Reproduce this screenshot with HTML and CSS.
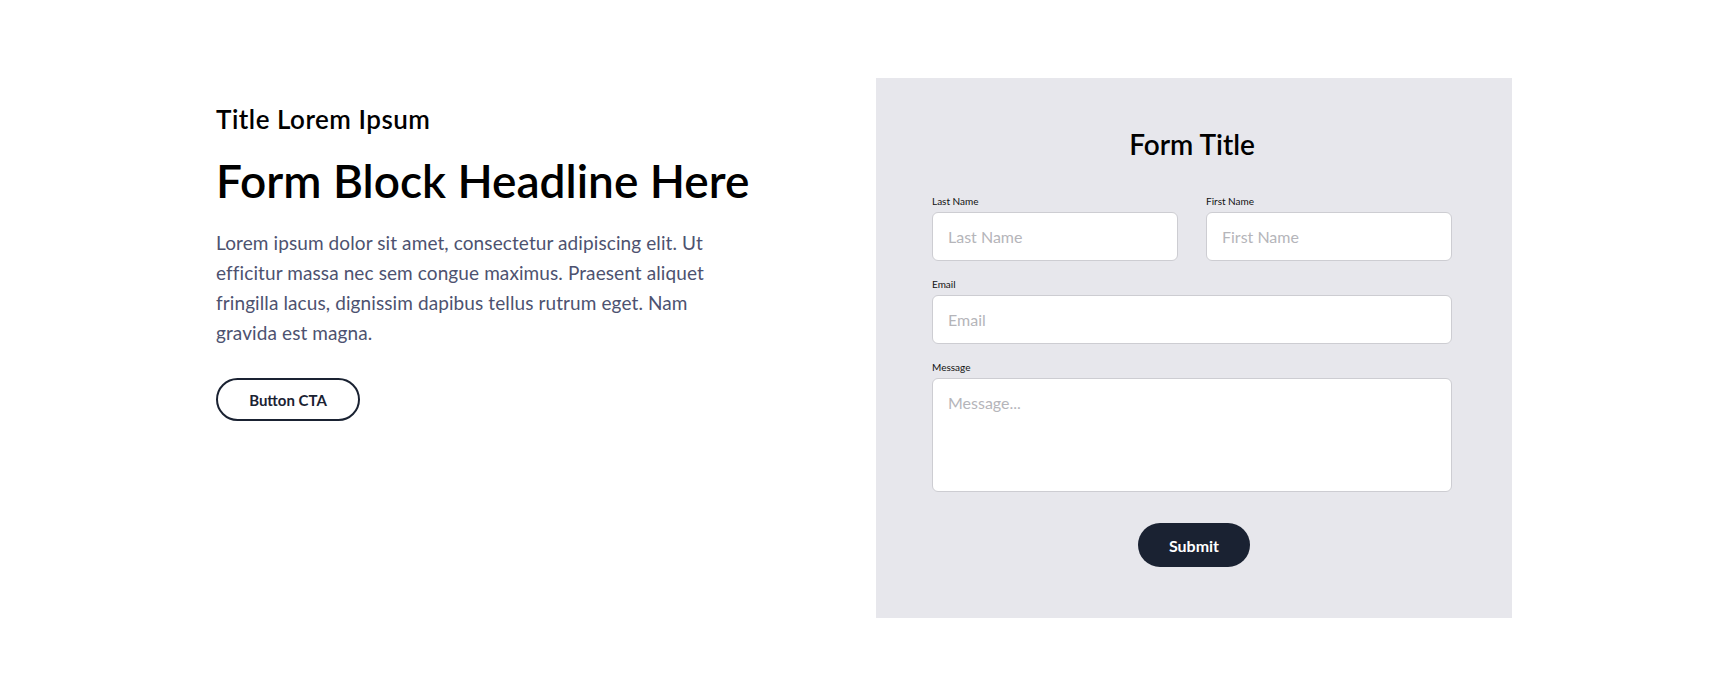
FILE: index.html
```html
<!DOCTYPE html>
<html lang="en">
<head>
<meta charset="utf-8">
<title>Form Block</title>
<link rel="stylesheet" href="styles.css">
</head>
<body>
<section class="section">
  <div class="container">
    <div class="intro">
      <h2 class="eyebrow">Title Lorem Ipsum</h2>
      <h1 class="headline">Form Block Headline Here</h1>
      <p class="lead">Lorem ipsum dolor sit amet, consectetur adipiscing elit. Ut efficitur massa nec sem congue maximus. Praesent aliquet fringilla lacus, dignissim dapibus tellus rutrum eget. Nam gravida est magna.</p>
      <a class="btn-outline" href="#">Button CTA</a>
    </div>
    <div class="panel">
      <h3 class="form-title">Form Title</h3>
      <form class="form">
        <div class="row-2">
          <div class="field">
            <label class="label" for="ln">Last Name</label>
            <input class="input" id="ln" type="text" placeholder="Last Name">
          </div>
          <div class="field">
            <label class="label" for="fn">First Name</label>
            <input class="input" id="fn" type="text" placeholder="First Name">
          </div>
        </div>
        <div class="field">
          <label class="label" for="em">Email</label>
          <input class="input" id="em" type="email" placeholder="Email">
        </div>
        <div class="field">
          <label class="label" for="msg">Message</label>
          <textarea class="input textarea" id="msg" placeholder="Message..."></textarea>
        </div>
        <div class="actions">
          <button class="btn-submit" type="button">Submit</button>
        </div>
      </form>
    </div>
  </div>
</section>
</body>
</html>
```
FILE: styles.css
```css
* { box-sizing: border-box; }
html, body { margin: 0; padding: 0; background: #ffffff; }
body { font-family: "Lato", "Noto Sans", sans-serif; color: #000; }

.section { padding: 78px 0; }
.container {
  width: 1296px;
  margin: 0 auto;
  display: grid;
  grid-template-columns: 636px 636px;
  column-gap: 24px;
  align-items: start;
}

.intro { padding-top: 27px; }
.eyebrow {
  margin: 0;
  font-size: 26px;
  line-height: 29px;
  font-weight: 600;
  letter-spacing: 0.5px;
  color: #000;
}
.headline {
  margin: 19px 0 0;
  font-size: 46px;
  line-height: 55px;
  font-weight: 600;
  color: #000;
}
.lead {
  margin: 20px 0 0;
  max-width: 510px;
  font-size: 19px;
  line-height: 30px;
  letter-spacing: 0.1px;
  color: #4d5270;
}
.btn-outline {
  display: inline-flex;
  align-items: center;
  justify-content: center;
  margin-top: 30px;
  width: 144px;
  height: 43px;
  border: 2px solid #1a2232;
  border-radius: 22px;
  font-size: 15px;
  font-weight: 700;
  color: #1a2232;
  text-decoration: none;
}

.panel {
  background: #e7e7ec;
  padding: 48px 60px 51px 56px;
}
.form-title {
  margin: 0;
  text-align: center;
  font-size: 28px;
  line-height: 36px;
  font-weight: 600;
  color: #000;
}
.form { margin-top: 33px; display: flex; flex-direction: column; gap: 17px; }
.row-2 { display: grid; grid-template-columns: 1fr 1fr; column-gap: 28px; }
.field { display: flex; flex-direction: column; }
.label {
  font-size: 10px;
  line-height: 12px;
  margin-bottom: 5px;
  color: #111;
}
.input {
  height: 49px;
  width: 100%;
  border: 1px solid #cdcdd2;
  border-radius: 6px;
  background: #fff;
  padding: 0 15px;
  font-family: inherit;
  font-size: 16px;
  color: #222;
  outline: none;
}
.input::placeholder { color: #b5b5ba; }
.textarea {
  height: 114px;
  padding: 14px 15px;
  resize: none;
  line-height: 20px;
}
.actions { display: flex; justify-content: center; margin-top: 14px; margin-left: 4px; }
.btn-submit {
  width: 112px;
  height: 44px;
  border: none;
  border-radius: 22px;
  background: #1a2232;
  color: #fff;
  font-family: inherit;
  font-size: 16px;
  font-weight: 700;
}
```
